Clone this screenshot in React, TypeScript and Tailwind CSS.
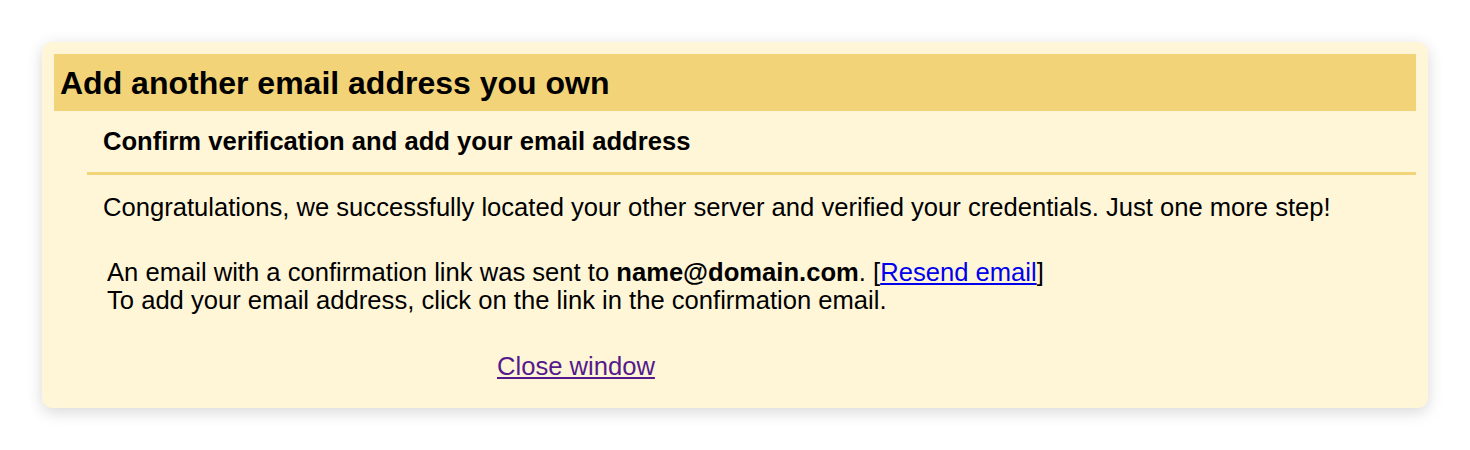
export default function App() {
  return (
    <div className="min-h-screen bg-white p-[42px] font-['Liberation_Sans',Arial,sans-serif] text-black">
      <div className="rounded-[10px] bg-[#fff6d8] p-3 shadow-[0_4px_16px_rgba(0,0,0,0.16)]">
        {/* Title band */}
        <div className="flex h-[57px] items-center bg-[#f3d377] px-[6px]">
          <h1 className="text-[32px] font-bold leading-none">Add another email address you own</h1>
        </div>

        <div className="ml-[33px]">
          <div className="flex h-[61px] items-center pl-4">
            <h2 className="text-[25.6px] font-bold leading-none">Confirm verification and add your email address</h2>
          </div>
          <div className="h-[3px] bg-[#f3d377]"></div>

          <p className="mt-[18px] pl-4 text-[25.6px] leading-[28px]">
            Congratulations, we successfully located your other server and verified your credentials. Just one more step!
          </p>

          <div className="mt-[37px] pl-5 text-[25.6px] leading-[28px]">
            <div>
              An email with a confirmation link was sent to <b>name@domain.com</b>. [
              <a href="#" className="text-[#0000ee] underline">
                Resend email
              </a>
              ]
            </div>
            <div>To add your email address, click on the link in the confirmation email.</div>
          </div>

          <div className="mt-[38px] mb-4 pl-[410px] text-[25.6px] leading-[28px]">
            <a href="#" className="text-[#551a8b] underline">
              Close window
            </a>
          </div>
        </div>
      </div>
    </div>
  );
}
